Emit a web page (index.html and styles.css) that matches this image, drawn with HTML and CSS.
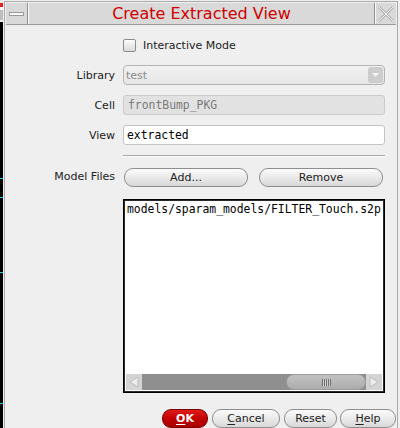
FILE: index.html
```html
<!DOCTYPE html>
<html>
<head>
<meta charset="utf-8">
<link rel="stylesheet" href="styles.css">
</head>
<body>
<div class="screen">
  <div class="strip"></div>
  <div class="gutter"></div>
  <div class="window">
    <div class="titlebar">
      <div class="tb-btn min"><span class="min-icon"></span></div>
      <div class="title">Create Extracted View</div>
      <div class="tb-btn close">
        <svg width="18" height="18" viewBox="0 0 18 18">
          <path d="M2 2 L16 16 M16 2 L2 16" stroke="#b4b4b4" stroke-width="2.6" fill="none"/>
          <path d="M2 2 L16 16 M16 2 L2 16" stroke="#f4f4f4" stroke-width="1" fill="none"/>
        </svg>
      </div>
    </div>
    <div class="content">
      <div class="form">
        <div></div>
        <div class="check"><span class="box"></span><span>Interactive Mode</span></div>

        <div class="lbl">Library</div>
        <div class="combo"><span class="combo-text">test</span><span class="combo-arrow"><svg width="7" height="4" viewBox="0 0 7 4"><path d="M0 0 L7 0 L3.5 4 Z" fill="#f4f4f4"/></svg></span></div>

        <div class="lbl">Cell</div>
        <div class="field disabled">frontBump_PKG</div>

        <div class="lbl">View</div>
        <div class="field">extracted</div>

        <div></div>
        <div class="sep"></div>

        <div class="lbl">Model Files</div>
        <div class="btnrow"><button class="btn">Add...</button><button class="btn">Remove</button></div>

        <div></div>
        <div class="list">
          <div class="list-body">models/sparam_models/FILTER_Touch.s2p</div>
          <div class="hscroll">
            <div class="sb-arrow"><svg width="12" height="12" viewBox="0 0 12 12"><path d="M10 1 L2 6 L10 11 Z" fill="#eeeeee" stroke="#bcbcbc" stroke-width="1"/></svg></div>
            <div class="sb-track"><div class="sb-thumb"><span class="grip"></span></div></div>
            <div class="sb-arrow"><svg width="12" height="12" viewBox="0 0 12 12"><path d="M2 1 L10 6 L2 11 Z" fill="#eeeeee" stroke="#bcbcbc" stroke-width="1"/></svg></div>
          </div>
        </div>
      </div>
      <div class="actions">
        <button class="btn ok"><u>O</u>K</button>
        <button class="btn cancel"><u>C</u>ancel</button>
        <button class="btn reset">Reset</button>
        <button class="btn help"><u>H</u>elp</button>
      </div>
    </div>
  </div>
</div>
</body>
</html>
```
FILE: styles.css
```css
html, body {
  margin: 0;
  padding: 0;
  background: #efefef;
}
body {
  width: 400px;
  height: 428px;
  overflow: hidden;
  font-family: "DejaVu Sans", sans-serif;
  font-size: 11px;
  color: #222;
}
.screen {
  display: flex;
  height: 428px;
}
.strip {
  width: 3px;
  flex: none;
  background: linear-gradient(to bottom,
    #e8e8e8 0, #e8e8e8 3px,
    #e02020 3px, #e02020 7px,
    #f4f4f4 7px, #f4f4f4 10px,
    #bdbdbd 10px, #bdbdbd 20px,
    #ececec 20px, #ececec 22px,
    #000 22px, #000 178px,
    #19d0e0 178px, #19d0e0 179px,
    #000 179px, #000 197px,
    #19d0e0 197px, #19d0e0 198px,
    #000 198px, #000 272px,
    #19d0e0 272px, #19d0e0 273px,
    #000 273px, #000 403px,
    #19d0e0 403px, #19d0e0 404px,
    #000 404px);
}
.gutter {
  width: 1px;
  flex: none;
  background: #efefef;
}
.window {
  margin-top: 1px;
  width: 392px;
  flex: none;
  border: 1px solid #a9a9a9;
  border-bottom: none;
  background: #efefef;
  display: flex;
  flex-direction: column;
}
.titlebar {
  margin: 1px 1px 0 1px;
  height: 21px;
  display: flex;
  background: #d9d9d9;
  border-bottom: 1px solid #9a9a9a;
}
.tb-btn {
  display: flex;
  align-items: center;
  justify-content: center;
  background: #d9d9d9;
}
.min {
  width: 21px;
  border-right: 1px solid #8e8e8e;
}
.min-icon {
  width: 13px;
  height: 2px;
  background: #f8f8f8;
  border: 1px solid #9a9a9a;
}
.title {
  flex: 1;
  border-left: 1px solid #fafafa;
  border-right: 1px solid #8e8e8e;
  text-align: center;
  font-size: 16px;
  line-height: 21px;
  color: #d00000;
}
.close {
  width: 20px;
  border-left: 1px solid #fafafa;
}
.content {
  padding: 10px 11px 0 0;
  flex: 1;
}
.form {
  display: grid;
  grid-template-columns: 110px 262px;
  column-gap: 8px;
  row-gap: 10px;
  align-items: center;
}
.lbl {
  text-align: right;
  color: #222;
}
.check {
  height: 20px;
  display: flex;
  align-items: center;
  gap: 7px;
}
.box {
  width: 11px;
  height: 11px;
  border: 1px solid #8c8c8c;
  border-radius: 2px;
  background: linear-gradient(to bottom, #fdfdfd, #dadada);
}
.combo {
  height: 18px;
  border: 1px solid #b4b4b4;
  border-radius: 4px;
  background: linear-gradient(to bottom, #f2f2f2, #e6e6e6);
  display: flex;
  align-items: center;
  justify-content: space-between;
  padding: 0 1px 0 2px;
}
.combo-text {
  color: #8a8a8a;
}
.combo-arrow {
  width: 15px;
  height: 16px;
  border-radius: 3px;
  background: #cdcdcd;
  display: flex;
  align-items: center;
  justify-content: center;
}
.field {
  height: 18px;
  border: 1px solid #c4c4c4;
  border-radius: 3px;
  background: #fff;
  font-family: "DejaVu Sans Mono", monospace;
  font-size: 11.4px;
  line-height: 18px;
  padding-left: 3px;
  color: #000;
}
.field.disabled {
  background: #e2e2e2;
  color: #7a7a7a;
  border-color: #cbcbcb;
  padding-left: 4px;
}
.sep {
  height: 1px;
  background: #a8a8a8;
  box-shadow: 0 1px 0 #fafafa;
}
.btnrow {
  display: flex;
  justify-content: space-between;
  padding: 2px 2px 0 1px;
}
.btn {
  height: 19px;
  border: 1px solid #8e8e8e;
  border-radius: 9px;
  background: linear-gradient(to bottom, #fbfbfb, #e8e8e8 55%, #d8d8d8);
  font-family: "DejaVu Sans", sans-serif;
  font-size: 11px;
  color: #222;
  padding: 0;
  margin: 0;
  line-height: 17px;
}
.btnrow .btn {
  width: 124px;
}
.btn u {
  text-decoration: underline;
  text-underline-offset: 2px;
}
.list {
  margin-top: 2px;
  height: 188px;
  border: 1px solid #000;
  box-shadow: inset 0 0 0 1px #2a2a2a;
  background: #fff;
  padding: 2px;
  display: flex;
  flex-direction: column;
}
.list-body {
  flex: 1;
  font-family: "DejaVu Sans Mono", monospace;
  font-size: 11.4px;
  line-height: 15px;
  padding-left: 1px;
  color: #000;
}
.hscroll {
  height: 16px;
  display: flex;
  background: #8f8f8f;
}
.sb-arrow {
  width: 16px;
  background: #d4d4d4;
  display: flex;
  align-items: center;
  justify-content: center;
}
.sb-track {
  flex: 1;
  display: flex;
  justify-content: flex-end;
  align-items: center;
}
.sb-thumb {
  width: 78px;
  height: 14px;
  border: 1px solid #9c9c9c;
  border-radius: 8px;
  background: linear-gradient(to bottom, #c2c2c2, #acacac);
  display: flex;
  align-items: center;
  justify-content: center;
}
.grip {
  width: 9px;
  height: 7px;
  background: repeating-linear-gradient(to right, #6e6e6e 0, #6e6e6e 1px, #d0d0d0 1px, #d0d0d0 2px);
}
.actions {
  margin-top: 16px;
  display: flex;
  justify-content: flex-end;
  gap: 4px;
  margin-right: -10px;
}
.ok {
  width: 46px;
  background: linear-gradient(to bottom, #e21a1a, #c00000 55%, #a80000);
  border-color: #7a0000;
  color: #fff;
  font-weight: bold;
}
.cancel { width: 68px; }
.reset { width: 53px; }
.help { width: 56px; margin-left: -1px; }
```
